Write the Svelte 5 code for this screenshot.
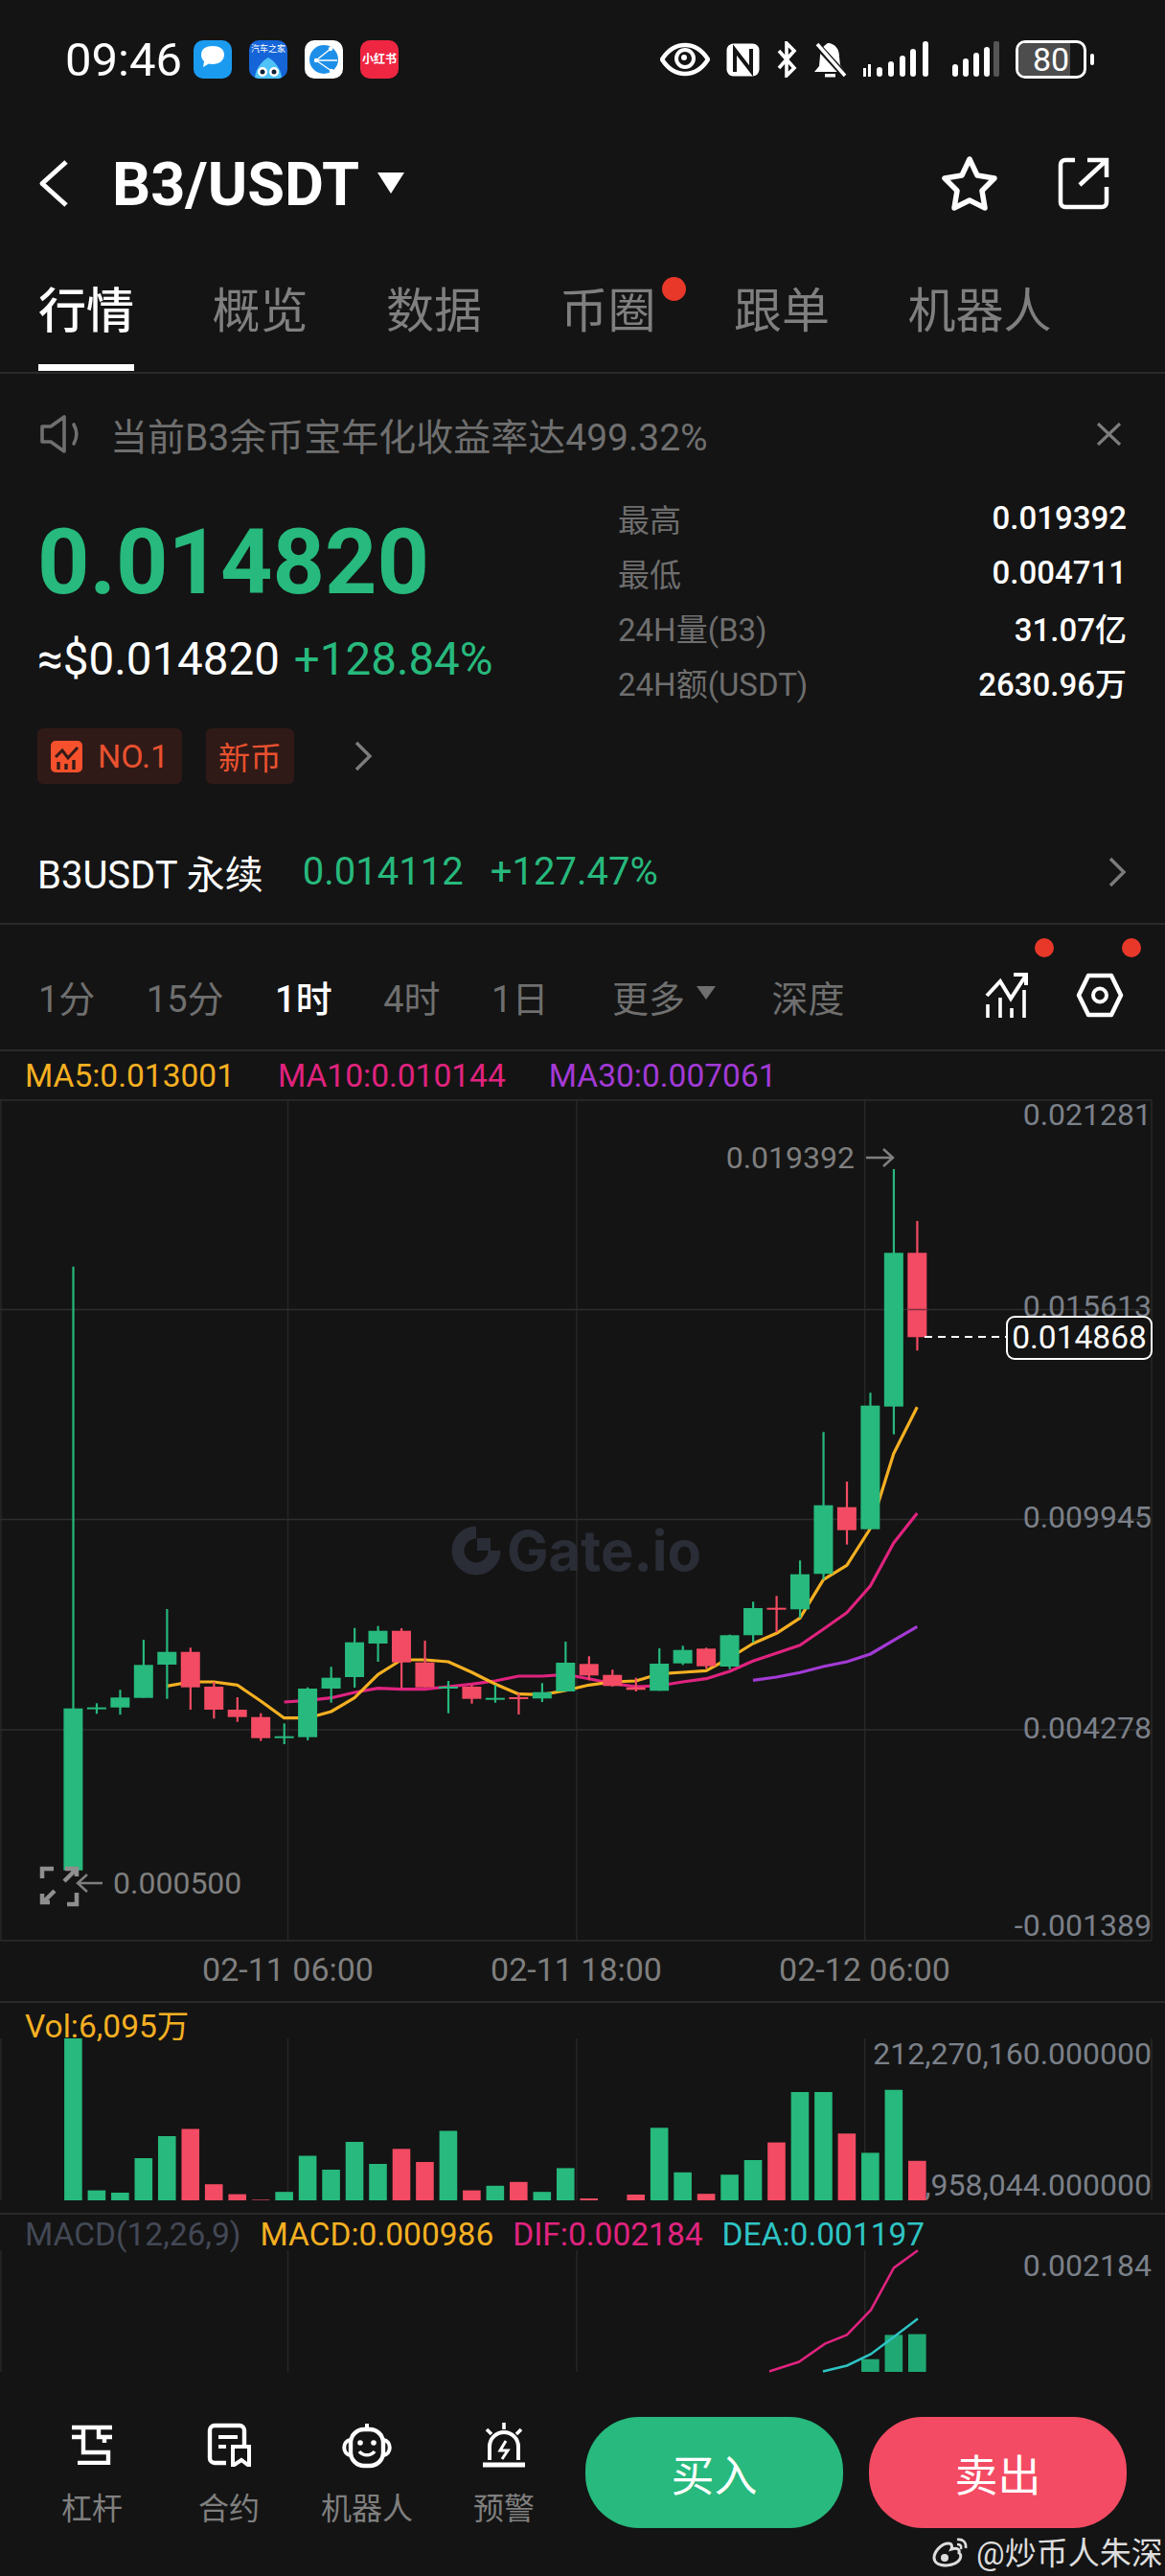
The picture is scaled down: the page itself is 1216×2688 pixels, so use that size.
<script>
  const UP = "#27b97d";
  const DOWN = "#f34b63";
  const tabs = ["行情", "概览", "数据", "币圈", "跟单", "机器人"];
  const stats = [
    ["最高", "0.019392"],
    ["最低", "0.004711"],
    ["24H量(B3)", "31.07亿"],
    ["24H额(USDT)", "2630.96万"],
  ];
  const frames = ["1分", "15分", "1时", "4时", "1日"];

  // body top, body bottom, wick top, wick bottom, rising (page y coordinates)
  const candles = [
    [1782.7, 1951.7, 1321.7, 1951.7, 1], [1781.6, 1783.6, 1777.3, 1788.3, 1], [1771.3, 1781.7, 1763.3, 1789.3, 1],
    [1737.3, 1771.7, 1711, 1771.7, 1], [1723.7, 1737, 1679, 1772.7, 1], [1723.7, 1760.7, 1719.3, 1784, 0],
    [1760, 1784, 1755, 1793.3, 0], [1784, 1791.7, 1771, 1796.7, 0], [1791.7, 1813.7, 1787.7, 1816.7, 0],
    [1811.7, 1813.7, 1798.3, 1820, 1], [1762, 1812.7, 1760.7, 1816, 1], [1750.7, 1762, 1739.3, 1776.7, 1],
    [1713.7, 1750, 1698.7, 1761, 1], [1701.7, 1715, 1696.7, 1734, 1], [1701.7, 1734.7, 1699, 1761.7, 0],
    [1734.7, 1760.7, 1712, 1760.7, 0], [1760, 1762, 1754, 1787.7, 1], [1760, 1772.7, 1758.3, 1777.7, 0],
    [1771.7, 1773.7, 1758.3, 1776.7, 1], [1771, 1773, 1766.7, 1789, 0], [1765.7, 1772.3, 1756.3, 1776, 1],
    [1735, 1765, 1713, 1765, 1], [1736.3, 1748.3, 1728.3, 1753.3, 0], [1747.7, 1759.3, 1742.3, 1760, 0],
    [1760.7, 1763.3, 1750.7, 1765, 0], [1736, 1764.3, 1720, 1764.3, 1], [1721.7, 1735.7, 1717.3, 1737.3, 1],
    [1720.3, 1738.7, 1719.3, 1741, 0], [1706.3, 1739, 1705.7, 1741.7, 1], [1678, 1706.3, 1671.3, 1714, 1],
    [1677.7, 1679.7, 1665.3, 1703.3, 0], [1642.7, 1679.3, 1628.3, 1688.3, 1], [1570.7, 1642.3, 1494.3, 1648.3, 1],
    [1572.7, 1596.7, 1546, 1611.7, 0], [1466.7, 1595.7, 1453.3, 1595.7, 1], [1307.3, 1467.7, 1220, 1496.7, 1],
    [1307.3, 1395.3, 1274, 1409.3, 0],
  ];

  const ma5 = [1759.3, 1755, 1755, 1758.3, 1775, 1792.7, 1792.7, 1786, 1771.7, 1747.3, 1732, 1732, 1734, 1745, 1757.3, 1767.7, 1768.3, 1764, 1758.3, 1755, 1754, 1746.7, 1745, 1743.3, 1730, 1715, 1704.3, 1688.3, 1648.3, 1633.3, 1595, 1516.7, 1468.3];
  const ma10 = [1776, 1774.3, 1771.7, 1766, 1761.7, 1762.7, 1762.7, 1760, 1757.3, 1754, 1749, 1749, 1747.3, 1751.7, 1756.7, 1760, 1759, 1755, 1751.7, 1744, 1733.3, 1725, 1716.7, 1700, 1682.7, 1655, 1610, 1579];
  const ma30 = [1753.3, 1750, 1745.3, 1739, 1734, 1726, 1711.7, 1697.3];

  // volume bar height, rising
  const volumes = [
    [169, 1], [10.4, 1], [8, 1], [44, 1], [67, 1], [74.5, 0], [16.8, 0], [6.4, 0], [0.6, 0], [8.8, 1],
    [46.5, 1], [32, 1], [61, 1], [38, 1], [53.7, 0], [40, 0], [72.5, 1], [10.4, 0], [15.2, 1], [19.2, 0],
    [8.8, 1], [33.6, 1], [2, 0], [0, 0], [6, 0], [75.7, 1], [29.2, 1], [6.8, 0], [26.8, 1], [42, 1],
    [60.4, 0], [113, 1], [113, 1], [69.7, 0], [49.6, 1], [115.3, 1], [41.2, 0],
  ];

  const priceLabels = [
    ["0.021281", 1163], ["0.015613", 1363], ["0.009945", 1583], ["0.004278", 1803], ["-0.001389", 2009],
  ];
  const gridY = [1148, 1366.5, 1585.5, 1805];
  const gridX = [1, 300.5, 602, 902.7, 1202];

  const cx = (i) => 76.4 + 24.47 * i;
  const line = (ys, from) => ys.map((y, i) => `${cx(from + i).toFixed(1)},${y}`).join(" ");
</script>

<div class="page">
  <div class="status">
    <span class="time">09:46</span>
    <div class="apps">
      <div class="app chat">
        <svg viewBox="0 0 40 40" width="40" height="40"><path d="M8 15c0-6 5-9 12-9s12 3 12 9-5 10-12 10c-2 0-3 0-4-.4L10 28l1-6c-2-2-3-4-3-7z" fill="#fff" /></svg>
      </div>
      <div class="app autohome">
        <span>汽车之家</span>
        <svg viewBox="0 0 40 22" width="40" height="22"><path d="M6 22C6 12 14 3 20 0c6 3 14 12 14 22z" fill="#4fc3f7" /><circle cx="14" cy="15" r="5" fill="#fff" /><circle cx="26" cy="15" r="5" fill="#fff" /><circle cx="14" cy="15" r="2.5" fill="#123" /><circle cx="26" cy="15" r="2.5" fill="#123" /></svg>
      </div>
      <div class="app network">
        <svg viewBox="0 0 40 40" width="40" height="40"><circle cx="20" cy="20" r="15" fill="#1e8fe8" /><path d="M27 9 12 21l16 11M12 21h22" stroke="#fff" stroke-width="1.4" fill="none" /><circle cx="12" cy="21" r="2.2" fill="#fff" /><circle cx="27" cy="9" r="2.2" fill="#fff" /><circle cx="28" cy="32" r="2.2" fill="#fff" /></svg>
      </div>
      <div class="app xhs">小红书</div>
    </div>
    <div class="sys">
      <svg class="eye" viewBox="0 0 52 36" width="52" height="36"><path d="M2 18C9 7 17 3 26 3s17 4 24 15c-7 11-15 15-24 15S9 29 2 18z" fill="none" stroke="#fff" stroke-width="4.5" /><circle cx="26" cy="17" r="9" fill="none" stroke="#fff" stroke-width="4" /><circle cx="25" cy="16" r="3" fill="#fff" /></svg>
      <svg class="nfc" viewBox="0 0 37 37" width="37" height="37"><rect x="1.5" y="1.5" width="34" height="34" rx="7" fill="#fff" /><path d="M10 31V8l17 22V7" fill="none" stroke="#141414" stroke-width="4" /></svg>
      <svg class="bt" viewBox="0 0 24 38" width="24" height="38"><path d="M4 10l16 18-8 8V2l8 8L4 28" fill="none" stroke="#fff" stroke-width="3.6" /></svg>
      <svg class="bell" viewBox="0 0 36 38" width="36" height="38"><path d="M16 2l2 0c7 2 10 7 10 14l1 9 5 7H2l5-6 1-11c1-6 3-10 8-13z" fill="#fff" /><path d="M3 2l32 35" stroke="#141414" stroke-width="7" /><path d="M5 3l29 33" stroke="#fff" stroke-width="3.5" /><rect x="13" y="34" width="11" height="3.5" fill="#fff" /></svg>
      <svg class="sig" viewBox="0 0 68 38" width="68" height="38" fill="#fff"><rect x="0" y="28" width="3" height="9" /><rect x="5" y="24" width="3" height="13" /><rect x="14" y="27" width="6" height="10" rx="3" /><rect x="26" y="21" width="6" height="16" rx="3" /><rect x="38" y="15" width="6" height="22" rx="3" /><rect x="49" y="8" width="6" height="29" rx="3" /><rect x="62" y="0" width="6" height="37" rx="3" /></svg>
      <svg class="sig2" viewBox="0 0 49 38" width="49" height="38"><g fill="#fff"><rect x="0" y="24" width="6" height="13" rx="3" /><rect x="11" y="18" width="6" height="19" rx="3" /><rect x="22" y="12" width="6" height="25" rx="3" /><rect x="33" y="6" width="6" height="31" rx="3" /></g><rect x="43" y="0" width="6" height="37" rx="2" fill="#555" /></svg>
      <div class="battery"><span class="level"></span><span class="pct">80</span></div>
      <span class="nub"></span>
    </div>
  </div>

  <div class="titlebar">
    <svg class="back" viewBox="0 0 32 49" width="32" height="49"><path d="M29 2 4 24.5 29 47" fill="none" stroke="#fff" stroke-width="5" stroke-linejoin="round" /></svg>
    <span class="pair">B3/USDT</span>
    <span class="caret"></span>
    <svg class="star" viewBox="0 0 60 58" width="60" height="58"><path d="M30 4l8 17 18 3-13 13 3 18-16-8-16 8 3-18L4 24l18-3z" fill="none" stroke="#fff" stroke-width="5.5" stroke-linejoin="round" /></svg>
    <svg class="share" viewBox="0 0 54 55" width="54" height="55"><path d="M18 3H8a5 5 0 0 0-5 5v39a5 5 0 0 0 5 5h38a5 5 0 0 0 5-5V31" fill="none" stroke="#fff" stroke-width="4.5" /><path d="M23 29 50 4M31 3h20v18" fill="none" stroke="#fff" stroke-width="4.5" /></svg>
  </div>

  <div class="tabs">
    {#each tabs as tab, i}
      <span class="tab" class:active={i === 0}>
        {tab}
        {#if i === 3}<i class="dot"></i>{/if}
      </span>
    {/each}
  </div>

  <div class="notice">
    <svg viewBox="0 0 46 42" width="46" height="42"><path d="M3 13h9L26 3v36L12 29H3z" fill="none" stroke="#6f6f6f" stroke-width="3.6" stroke-linejoin="round" /><path d="M36 11c4 7 4 13 0 20" fill="none" stroke="#6f6f6f" stroke-width="3.6" stroke-linecap="round" /></svg>
    <span class="notice-text">当前B3余币宝年化收益率达499.32%</span>
    <svg class="close" viewBox="0 0 27 24" width="27" height="24"><path d="M2 1l23 22M25 1 2 23" stroke="#7c7c7c" stroke-width="3.2" /></svg>
  </div>

  <div class="ticker">
    <div class="ticker-left">
      <div class="price">0.014820</div>
      <div class="sub"><span class="usd">≈$0.014820</span><span class="chg">+128.84%</span></div>
      <div class="tags">
        <span class="tag">
          <svg viewBox="0 0 33 33" width="33" height="33"><rect width="33" height="33" rx="5" fill="#f4512c" /><path d="M5 17l7-7 6 8 10-11" fill="none" stroke="#331a17" stroke-width="3" /><path d="M8 22v8M16 24v6M24 20v10" stroke="#331a17" stroke-width="3.4" /></svg>
          NO.1
        </span>
        <span class="tag new">新币</span>
        <svg class="tag-more" viewBox="0 0 20 32" width="20" height="32"><path d="M3 2l14 14L3 30" fill="none" stroke="#7c7c7c" stroke-width="3.4" /></svg>
      </div>
    </div>
    <div class="stats">
      {#each stats as [label, value]}
        <div class="stat"><span>{label}</span><b>{value}</b></div>
      {/each}
    </div>
  </div>

  <div class="perp">
    <span class="perp-name">B3USDT 永续</span>
    <span class="perp-num">0.014112</span>
    <span class="perp-num chg2">+127.47%</span>
    <svg class="perp-more" viewBox="0 0 20 32" width="20" height="32"><path d="M3 2l14 14L3 30" fill="none" stroke="#7c7c7c" stroke-width="3.4" /></svg>
  </div>

  <div class="frames">
    {#each frames as f, i}
      <span class:on={i === 2}>{f}</span>
    {/each}
    <span class="more">更多<i class="caret-s"></i></span>
    <span>深度</span>
    <div class="tools">
      <div class="tool">
        <svg viewBox="0 0 45 48" width="45" height="48"><path d="M2 24 16 9l11 18L42 4M30 2h13v11" fill="none" stroke="#fff" stroke-width="4" /><path d="M3 33v14M16 26v21M28 37v10M41 18v29" stroke="#fff" stroke-width="3.6" /></svg>
        <i class="red"></i>
      </div>
      <div class="tool">
        <svg viewBox="0 0 50 47" width="50" height="47"><path d="M13 3h24l10 20.500-10 20.500H13L3 23.500z" fill="none" stroke="#fff" stroke-width="4.5" stroke-linejoin="round" /><circle cx="25" cy="23.500" r="7" fill="none" stroke="#fff" stroke-width="4" /></svg>
        <i class="red far"></i>
      </div>
    </div>
  </div>

  <div class="legend ma">
    <span class="c-orange">MA5:0.013001</span>
    <span class="c-pink">MA10:0.010144</span>
    <span class="c-purple">MA30:0.007061</span>
  </div>

  <svg class="chart" viewBox="0 1147 1216 880" width="1216" height="880">
    {#each gridX as x}<line x1={x} x2={x} y1="1148" y2="2025" class="grid-v" />{/each}
    {#each gridY as y}<line x1="0" x2="1202" y1={y} y2={y} class="grid-h" />{/each}
    <line x1="0" x2="1202" y1="2025" y2="2025" class="grid-h" />

    <path d="M497 1599A19 19 0 1 0 516 1618" fill="none" stroke="#2a2c36" stroke-width="13" />
    <rect x="498" y="1605" width="14" height="13" fill="#2a2c36" />
    <text x="529" y="1639" class="gate">Gate.io</text>

    {#each priceLabels as [label, y]}
      <text x="1202" y={y + 11} class="axis">{label}</text>
    {/each}

    <polyline points={line(ma30, 29)} class="ma-line" stroke="#a33ad6" />
    <polyline points={line(ma10, 9)} class="ma-line" stroke="#e0237f" />
    <polyline points={line(ma5, 4)} class="ma-line" stroke="#f5b022" />

    {#each candles as [top, bottom, wickTop, wickBottom, up], i}
      <rect x={cx(i) - 1} y={wickTop} width="2.200" height={wickBottom - wickTop} fill={up ? UP : DOWN} />
      <rect x={cx(i) - 10} y={top} width="20" height={bottom - top} fill={up ? UP : DOWN} />
    {/each}
    <line x1="948" x2="968" y1="1366.500" y2="1366.500" stroke="#7a3040" stroke-width="1.500" />

    <text x="892" y="1219" class="note end">0.019392</text>
    <path d="M904 1208h28M922 1199l10 9-10 9" class="note-arrow" />
    <text x="118" y="1976" class="note">0.000500</text>
    <path d="M107 1965H81M91 1956l-10 9 10 9" class="note-arrow" />
    <path d="M44 1960v-10h12M70 1987h10v-12M52 1985h-8v-9m1 9 12-12M68 1950h12v8m-1-7-12 12" class="expand" />

    <line x1="965" x2="1050" y1="1395" y2="1395" class="dash" />
    <rect x="1051" y="1374" width="151" height="44" rx="8" class="now-box" />
    <text x="1126.500" y="1407" class="now">0.014868</text>
  </svg>

  <div class="dates">
    <span>02-11 06:00</span>
    <span>02-11 18:00</span>
    <span>02-12 06:00</span>
  </div>

  <div class="legend vol"><span class="c-orange">Vol:6,095万</span></div>
  <svg class="chart" viewBox="0 2129 1216 182" width="1216" height="182">
    {#each gridX as x}<line x1={x} x2={x} y1="2129" y2="2298" class="grid-v" />{/each}
    <text x="1202" y="2156" class="axis">212,270,160.000000</text>
    <text x="1202" y="2293" class="axis">11,958,044.000000</text>
    {#each volumes as [h, up], i}
      <rect x={cx(i) - 9.300} y={2298 - h} width="18.600" height={h} fill={up ? UP : DOWN} />
    {/each}
  </svg>

  <div class="legend macd">
    <span class="c-slate">MACD(12,26,9)</span>
    <span class="c-orange">MACD:0.000986</span>
    <span class="c-pink">DIF:0.002184</span>
    <span class="c-cyan">DEA:0.001197</span>
  </div>
  <svg class="chart" viewBox="0 2350 1216 127" width="1216" height="127">
    {#each gridX.slice(0, 4) as x}<line x1={x} x2={x} y1="2350" y2="2477" class="grid-v" />{/each}
    <text x="1202" y="2377" class="axis">0.002184</text>
    <rect x={cx(34) - 9.300} y="2463.700" width="18.600" height="13.300" fill="#1fa873" />
    <rect x={cx(35) - 9.300} y="2438.400" width="18.600" height="38.600" fill="#1fa873" />
    <rect x={cx(36) - 9.300} y="2437.600" width="18.600" height="39.400" fill="#1fa873" />
    <polyline points="803,2476.500 834,2466.500 861,2447.700 884,2438.400 909,2412.400 933,2368.400 958,2350.300" class="thin" stroke="#e0237f" />
    <polyline points="859,2476.500 884,2470.500 909,2458.500 933,2440.400 958,2421.600" class="thin" stroke="#2ec4c4" />
  </svg>

  <div class="actions">
    <div class="action a1">
      <svg viewBox="0 0 46 44" width="46" height="44"><path d="M2 5h42M2 15h12M14 5v26h26v11H8M30 5v10h14M36 15v6" fill="none" stroke="#fff" stroke-width="4.400" /></svg>
      <span>杠杆</span>
    </div>
    <div class="action a2">
      <svg viewBox="0 0 46 46" width="46" height="46"><path d="M20 42H8a5 5 0 0 1-5-5V8a5 5 0 0 1 5-5h26a5 5 0 0 1 5 5v16" fill="none" stroke="#fff" stroke-width="4.400" /><path d="M12 15h20M12 25h8" stroke="#fff" stroke-width="4" /><path d="M27 25h17v20l-8-6-9 6z" fill="none" stroke="#fff" stroke-width="4" /></svg>
      <span>合约</span>
    </div>
    <div class="action a3">
      <svg viewBox="0 0 52 48" width="52" height="48"><path d="M26 1v6" stroke="#fff" stroke-width="4" /><rect x="9" y="7" width="34" height="38" rx="14" fill="none" stroke="#fff" stroke-width="4.400" /><path d="M9 18c-9 1-9 15 0 16M43 18c9 1 9 15 0 16" fill="none" stroke="#fff" stroke-width="4" /><circle cx="19" cy="21" r="2.800" fill="#fff" /><circle cx="33" cy="21" r="2.800" fill="#fff" /><path d="M18 30c4 5 12 5 16 0" fill="none" stroke="#fff" stroke-width="3.600" /></svg>
      <span>机器人</span>
    </div>
    <div class="action a4">
      <svg viewBox="0 0 46 49" width="46" height="49"><path d="M23 0v7M5 7l5 5M41 7l-5 5" stroke="#fff" stroke-width="3.600" /><path d="M8 39V25a15 15 0 0 1 30 0v14" fill="none" stroke="#fff" stroke-width="4" /><path d="M1 44h44" stroke="#fff" stroke-width="5" /><path d="M25 19l-6 10h8l-6 9" fill="none" stroke="#fff" stroke-width="3" /></svg>
      <span>预警</span>
    </div>
    <button class="trade buy">买入</button>
    <button class="trade sell">卖出</button>
  </div>

  <div class="weibo">
    <svg viewBox="0 0 42 34" width="42" height="34"><path d="M4 24c0-7 8-15 15-15 4 0 4 4 3 6 6-2 9 0 8 4 4 2 2 12-13 13C9 32 4 29 4 24z" fill="none" stroke="#ddd" stroke-width="3" /><circle cx="15" cy="24" r="4" fill="#ddd" /><path d="M28 5c6-1 10 3 9 9M28 10c3 0 5 1 4 5" fill="none" stroke="#ddd" stroke-width="2.600" /></svg>
    <span>@炒币人朱深</span>
  </div>
</div>

<style>
  :global(body) {
    margin: 0;
    background: #141414;
  }

  .page {
    position: relative;
    width: 1216px;
    height: 2688px;
    background: #141414;
    color: #fff;
    font-family: Roboto, "Noto Sans CJK SC", sans-serif;
    overflow: hidden;
  }

  svg {
    display: block;
    flex-shrink: 0;
  }

  .status {
    display: flex;
    align-items: center;
    height: 124px;
    padding: 0 74px 0 68px;
    box-sizing: border-box;
  }

  .time {
    font-size: 49px;
    width: 134px;
  }

  .apps {
    display: flex;
    gap: 18px;
  }

  .app {
    width: 40px;
    height: 40px;
    border-radius: 10px;
    overflow: hidden;
  }

  .chat {
    background: #1b9bf0;
  }

  .autohome {
    background: #1565d8;
    font-size: 9px;
    line-height: 18px;
    text-align: center;
    white-space: nowrap;
  }

  .network {
    background: #fff;
  }

  .xhs {
    background: #ee2642;
    font-size: 12px;
    font-weight: 700;
    line-height: 40px;
    text-align: center;
    white-space: nowrap;
  }

  .sys {
    display: flex;
    align-items: center;
    margin-left: auto;
    gap: 15px;
  }

  .eye {
    margin-right: 1px;
  }

  .bell {
    margin-right: 2px;
  }

  .sig {
    margin-right: 10px;
  }

  .sig2 {
    margin-right: 2px;
  }

  .battery {
    position: relative;
    width: 74px;
    height: 40px;
    box-sizing: border-box;
    border: 3px solid #fff;
    border-radius: 10px;
    overflow: hidden;
  }

  .level {
    position: absolute;
    inset: 0 14px 0 0;
    background: #4d4d4d;
  }

  .pct {
    position: relative;
    display: block;
    font-size: 34px;
    line-height: 34px;
    text-align: center;
  }

  .nub {
    width: 4px;
    height: 12px;
    background: #fff;
    border-radius: 2px;
    margin-left: -11px;
  }

  .titlebar {
    display: flex;
    align-items: center;
    height: 134px;
    padding: 0 58px 0 40px;
  }

  .pair {
    font-size: 63px;
    font-weight: 700;
    margin-left: 45px;
    padding-top: 3px;
  }

  .caret {
    width: 0;
    height: 0;
    margin-left: 19px;
    border-left: 14px solid transparent;
    border-right: 14px solid transparent;
    border-top: 22px solid #fff;
  }

  .star {
    margin-left: auto;
  }

  .share {
    margin-left: 62px;
  }

  .tabs {
    display: flex;
    gap: 81.500px;
    height: 132px;
    box-sizing: border-box;
    padding: 35px 0 0 40px;
    border-bottom: 2px solid #2a2a2a;
  }

  .tab {
    position: relative;
    height: 64px;
    font-size: 50px;
    line-height: 64px;
    color: #7f7f7f;
  }

  .tab.active {
    color: #fff;
    font-weight: 500;
  }

  .tab.active::after {
    content: "";
    position: absolute;
    left: 0;
    right: 0;
    top: 87px;
    height: 7px;
    background: #fff;
  }

  .dot {
    position: absolute;
    right: -31px;
    top: -4px;
    width: 25px;
    height: 25px;
    border-radius: 50%;
    background: #e8382a;
  }

  .notice {
    display: flex;
    align-items: center;
    height: 125px;
    padding: 0 45px 0 41px;
  }

  .notice-text {
    margin-left: 28px;
    font-size: 39px;
    color: #6f6f6f;
  }

  .close {
    margin-left: auto;
  }

  .ticker {
    display: flex;
    justify-content: space-between;
    padding: 0 40px 0 39px;
  }

  .price {
    margin-top: 22px;
    font-size: 95px;
    line-height: 100px;
    font-weight: 700;
    color: #27b97d;
  }

  .sub {
    display: flex;
    gap: 15px;
    margin-top: 23px;
    font-size: 47.500px;
    line-height: 56px;
  }

  .chg {
    color: #27b97d;
  }

  .tags {
    display: flex;
    align-items: center;
    margin: 44px 0 0 0;
  }

  .tag {
    display: flex;
    align-items: center;
    gap: 16px;
    height: 58px;
    padding: 0 14px;
    border-radius: 6px;
    background: #301a17;
    color: #e9512f;
    font-size: 34px;
    margin-right: 25px;
  }

  .tag.new {
    padding: 0 13px;
    font-size: 33px;
  }

  .tag-more {
    margin-left: 37px;
  }

  .stats {
    width: 531px;
    margin-top: -3px;
  }

  .stat {
    display: flex;
    justify-content: space-between;
    align-items: center;
    height: 57px;
    font-size: 33px;
    color: #6e6e6e;
  }

  .stat b {
    font-weight: 500;
    color: #fff;
  }

  .perp {
    display: flex;
    align-items: center;
    box-sizing: content-box;
    height: 97px;
    margin-top: 43px;
    padding: 0 40px 5px 39px;
    border-bottom: 2px solid #2a2a2a;
    font-size: 40px;
  }

  .perp-name {
    margin-right: 41px;
  }

  .perp-num {
    color: #27b97d;
  }

  .chg2 {
    margin-left: 28px;
  }

  .perp-more {
    margin-left: auto;
  }

  .frames {
    display: flex;
    align-items: center;
    gap: 53.500px;
    height: 132px;
    box-sizing: border-box;
    padding: 44px 43px 26px 40px;
    border-bottom: 2px solid #2a2a2a;
    font-size: 38px;
    color: #6f6f6f;
  }

  .frames .on {
    color: #fff;
    font-weight: 500;
  }

  .more {
    display: flex;
    align-items: center;
    gap: 12px;
    margin-left: 13px;
    margin-right: 5px;
  }

  .caret-s {
    width: 0;
    height: 0;
    border-left: 10px solid transparent;
    border-right: 10px solid transparent;
    border-top: 14px solid #6f6f6f;
    margin-top: -6px;
  }

  .tools {
    display: flex;
    gap: 50px;
    margin-left: auto;
  }

  .tool {
    position: relative;
  }

  .red {
    position: absolute;
    top: -36px;
    right: -27px;
    width: 20px;
    height: 20px;
    border-radius: 50%;
    background: #e8382a;
  }

  .red.far {
    right: -18px;
  }

  .legend {
    display: flex;
    box-sizing: border-box;
    padding-left: 26px;
    font-size: 33.500px;
    line-height: 34px;
    white-space: nowrap;
  }

  .legend.ma {
    height: 50px;
    padding-top: 9px;
    gap: 45px;
  }

  .legend.vol {
    height: 39px;
    padding-top: 8px;
    border-top: 2px solid #2a2a2a;
  }

  .legend.macd {
    height: 39px;
    padding-top: 4px;
    gap: 20px;
    border-top: 2px solid #2a2a2a;
  }

  .c-orange {
    color: #f5b022;
  }

  .c-pink {
    color: #e0237f;
  }

  .c-purple {
    color: #a33ad6;
  }

  .c-cyan {
    color: #2ec4c4;
  }

  .c-slate {
    color: #434855;
  }

  .chart {
    overflow: visible;
  }

  .grid-v {
    stroke: #272727;
    stroke-width: 1.5;
  }

  .grid-h {
    stroke: #2d2d2d;
    stroke-width: 1.5;
  }

  .gate {
    font-family: Inter, sans-serif;
    font-size: 58px;
    font-weight: 700;
    fill: #2a2c36;
  }

  .axis {
    font-size: 32px;
    fill: #7b8089;
    text-anchor: end;
  }

  .ma-line {
    fill: none;
    stroke-width: 3.200;
    stroke-linejoin: round;
  }

  .thin {
    fill: none;
    stroke-width: 2.5;
  }

  .note {
    font-size: 32px;
    fill: #7f7f7f;
  }

  .note.end {
    text-anchor: end;
  }

  .note-arrow {
    fill: none;
    stroke: #7f7f7f;
    stroke-width: 2.5;
  }

  .expand {
    fill: none;
    stroke: #8f8f8f;
    stroke-width: 4.5;
  }

  .dash {
    stroke: #fff;
    stroke-width: 2;
    stroke-dasharray: 8 6;
  }

  .now-box {
    fill: #141414;
    stroke: #fff;
    stroke-width: 2;
  }

  .now {
    font-size: 33.500px;
    fill: #fff;
    text-anchor: middle;
  }

  .dates {
    display: grid;
    grid-template-columns: repeat(3, 301px);
    justify-content: start;
    height: 61px;
    padding: 0 0 0 150px;
    box-sizing: border-box;
    font-size: 34px;
    line-height: 56px;
    color: #7f7f7f;
    text-align: center;
  }

  .actions {
    display: flex;
    align-items: flex-start;
    height: 116px;
    margin-top: 47px;
  }

  .action {
    position: absolute;
    top: 2528px;
    display: flex;
    flex-direction: column;
    align-items: center;
    width: 120px;
    height: 110px;
    justify-content: space-between;
    font-size: 32px;
    color: #7f7f7f;
  }

  .a1 {
    left: 36px;
  }

  .a2 {
    left: 179px;
  }

  .a3 {
    left: 323px;
  }

  .a4 {
    left: 466px;
  }

  .trade {
    width: 269px;
    height: 116px;
    border: none;
    border-radius: 56px;
    color: #fff;
    font-family: inherit;
    font-size: 45px;
  }

  .buy {
    margin-left: 611px;
    background: #27b97d;
  }

  .sell {
    margin-left: 27px;
    background: #f34b63;
  }

  .weibo {
    position: absolute;
    left: 971px;
    top: 2638px;
    display: flex;
    align-items: center;
    gap: 6px;
    font-size: 33px;
    color: #ddd;
    white-space: nowrap;
  }
</style>
